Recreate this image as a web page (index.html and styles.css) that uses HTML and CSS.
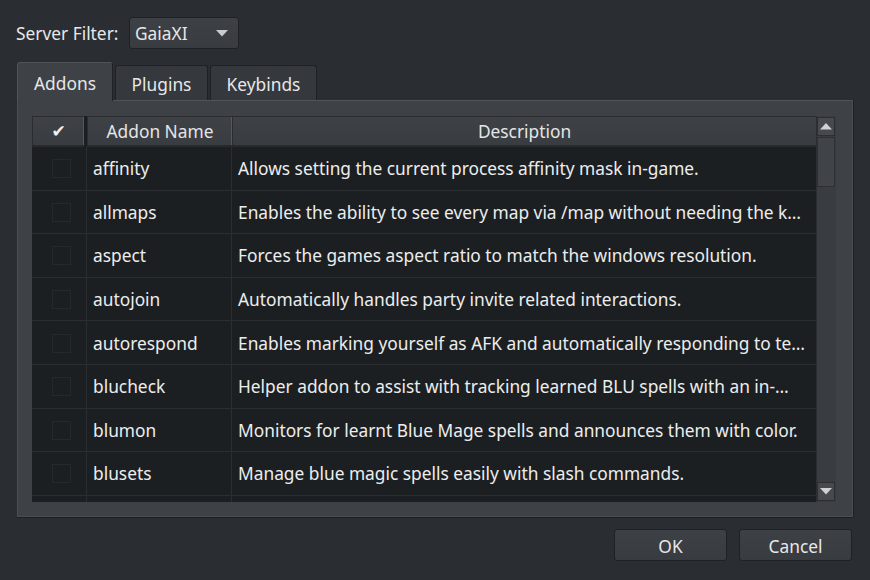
FILE: index.html
```html
<!DOCTYPE html>
<html>
<head>
<meta charset="utf-8">
<link rel="stylesheet" href="styles.css">
</head>
<body>
<div class="dialog">
  <div class="filter-row">
    <span class="label">Server Filter:</span>
    <div class="combo">
      <span class="combo-text">GaiaXI</span>
      <svg class="combo-arrow" width="12" height="7" viewBox="0 0 12 7"><polygon points="0,0 12,0 6,6.5" fill="#c9cbcd"/></svg>
    </div>
  </div>
  <div class="tabs">
    <div class="tab active">Addons</div>
    <div class="tab">Plugins</div>
    <div class="tab">Keybinds</div>
  </div>
  <div class="pane">
    <div class="view">
      <div class="grid">
        <div class="hcell hcheck">✔</div>
        <div class="hcell hname">Addon Name</div>
        <div class="hcell hdesc">Description</div>

        <div class="cell ccheck"><span class="box"></span></div><div class="cell cname">affinity</div><div class="cell cdesc">Allows setting the current process affinity mask in-game.</div>
        <div class="cell ccheck"><span class="box"></span></div><div class="cell cname">allmaps</div><div class="cell cdesc">Enables the ability to see every map via /map without needing the k…</div>
        <div class="cell ccheck"><span class="box"></span></div><div class="cell cname">aspect</div><div class="cell cdesc">Forces the games aspect ratio to match the windows resolution.</div>
        <div class="cell ccheck"><span class="box"></span></div><div class="cell cname">autojoin</div><div class="cell cdesc">Automatically handles party invite related interactions.</div>
        <div class="cell ccheck"><span class="box"></span></div><div class="cell cname">autorespond</div><div class="cell cdesc">Enables marking yourself as AFK and automatically responding to te…</div>
        <div class="cell ccheck"><span class="box"></span></div><div class="cell cname">blucheck</div><div class="cell cdesc">Helper addon to assist with tracking learned BLU spells with an in-…</div>
        <div class="cell ccheck"><span class="box"></span></div><div class="cell cname">blumon</div><div class="cell cdesc">Monitors for learnt Blue Mage spells and announces them with color.</div>
        <div class="cell ccheck"><span class="box"></span></div><div class="cell cname">blusets</div><div class="cell cdesc">Manage blue magic spells easily with slash commands.</div>
        <div class="cell ccheck"><span class="box"></span></div><div class="cell cname"></div><div class="cell cdesc"></div>
      </div>
      <div class="scrollbar">
        <div class="sbtn"><svg width="12" height="7" viewBox="0 0 12 7"><polygon points="0,6.5 12,6.5 6,0" fill="#cfd1d3"/></svg></div>
        <div class="handle"></div>
        <div class="trough"></div>
        <div class="sbtn"><svg width="12" height="7" viewBox="0 0 12 7"><polygon points="0,0 12,0 6,6.5" fill="#cfd1d3"/></svg></div>
      </div>
    </div>
  </div>
  <div class="buttons">
    <div class="btn">OK</div>
    <div class="btn">Cancel</div>
  </div>
</div>
</body>
</html>
```
FILE: styles.css
```css
html, body {
  margin: 0;
  padding: 0;
  background: #2a2d31;
  width: 870px;
  height: 580px;
  overflow: hidden;
}
.dialog {
  font-family: "Noto Sans", "Open Sans", sans-serif;
  font-size: 17.33px;
  color: #e6e7e8;
  padding: 17px 17px 0 17px;
  display: flex;
  flex-direction: column;
}
.filter-row {
  display: flex;
  align-items: center;
  height: 32px;
}
.label {
  margin-left: -1px;
  width: 113px;
}
.combo {
  height: 30px;
  border: 1px solid #1f2124;
  border-radius: 3px;
  background: linear-gradient(#3d4044, #383b3f);
  display: flex;
  align-items: center;
  justify-content: space-between;
  padding: 0 10px 0 5px;
  box-sizing: content-box;
  width: 93px;
}
.combo-arrow {
  margin-top: 1px;
}
.tabs {
  display: flex;
  align-items: flex-end;
  gap: 2px;
  margin-top: 13px;
  height: 38px;
  position: relative;
  z-index: 1;
}
.tab {
  height: 35px;
  box-sizing: border-box;
  border: 1px solid #1f2124;
  border-bottom: none;
  border-radius: 3px 3px 0 0;
  background: #35383c;
  display: flex;
  align-items: center;
  justify-content: center;
  padding: 2px 0 0 0;
}
.tab:nth-child(2) { width: 93px; }
.tab:nth-child(3) { width: 107px; }
.tab.active {
  width: 96px;
  height: 39px;
  margin-bottom: -1px;
  background: #3e4145;
  border-color: #505357 #1f2124 transparent #505357;
  padding: 1px 0 0 0;
}
.pane {
  width: 836px;
  height: 417px;
  box-sizing: border-box;
  background: #3e4145;
  border: 1px solid #4a4d51;
  border-top-color: #505357;
  box-shadow: 0 1px 0 #1d1f22, 1px 0 0 #1d1f22;
  padding: 15px 16px 14px 14px;
}
.view {
  display: flex;
  height: 386px;
  background: #1c1f22;
  overflow: hidden;
}
.grid {
  width: 784px;
  display: grid;
  grid-template-columns: 55px 145px 584px;
  grid-auto-rows: 43.6px;
  grid-template-rows: 31px;
  align-content: start;
}
.hcell {
  background: linear-gradient(#3e4145, #393c40);
  border-top: 1px solid #2a2c30;
  border-bottom: 2px solid #27292d;
  box-sizing: border-box;
  display: flex;
  align-items: center;
  justify-content: center;
  color: #e4e5e6;
}
.hcheck {
  border-left: 1px solid #2a2c30;
  box-shadow: inset -1px 0 0 #55585c;
  margin-right: 3px;
  font-family: "DejaVu Sans", sans-serif;
  font-size: 17px;
  font-weight: bold;
  color: #f0f0f0;
}
.hname {
  border-left: 1px solid #2a2c30;
  box-shadow: inset -1px 0 0 #55585c;
}
.hdesc {
  border-left: 1px solid #2a2c30;
}
.cell {
  border-bottom: 1px solid #2a2d31;
  box-sizing: border-box;
  display: flex;
  align-items: center;
  white-space: nowrap;
  overflow: hidden;
  color: #eceded;
}
.ccheck {
  justify-content: center;
  border-right: 1px solid #2a2d31;
}
.box {
  width: 19px;
  height: 19px;
  box-sizing: border-box;
  border: 1px solid #26292c;
  margin-left: 4px;
  margin-top: 1px;
}
.cname {
  padding-left: 6px;
  border-right: 1px solid #2a2d31;
}
.cdesc {
  padding-left: 6px;
}
.scrollbar {
  width: 20px;
  background: #393c40;
  border-left: 1px solid #2c2e32;
  box-sizing: border-box;
  display: flex;
  flex-direction: column;
  padding: 1px 1px 1px 0;
}
.sbtn {
  height: 19px;
  box-sizing: border-box;
  border: 1px solid #2c2e32;
  background: #46494d;
  display: flex;
  align-items: center;
  justify-content: center;
  flex: none;
}
.handle {
  height: 50px;
  flex: none;
  box-sizing: border-box;
  border: 1px solid #2e3034;
  background: #404347;
  margin-top: 1px;
}
.trough {
  flex: 1;
}
.buttons {
  display: flex;
  justify-content: flex-end;
  gap: 12px;
  margin-top: 12px;
  margin-right: 1px;
}
.btn {
  width: 113px;
  height: 32px;
  box-sizing: border-box;
  border: 1px solid #1f2124;
  border-radius: 3px;
  background: linear-gradient(#3d4044, #383b3f);
  display: flex;
  align-items: center;
  justify-content: center;
  padding-top: 2px;
}
```
